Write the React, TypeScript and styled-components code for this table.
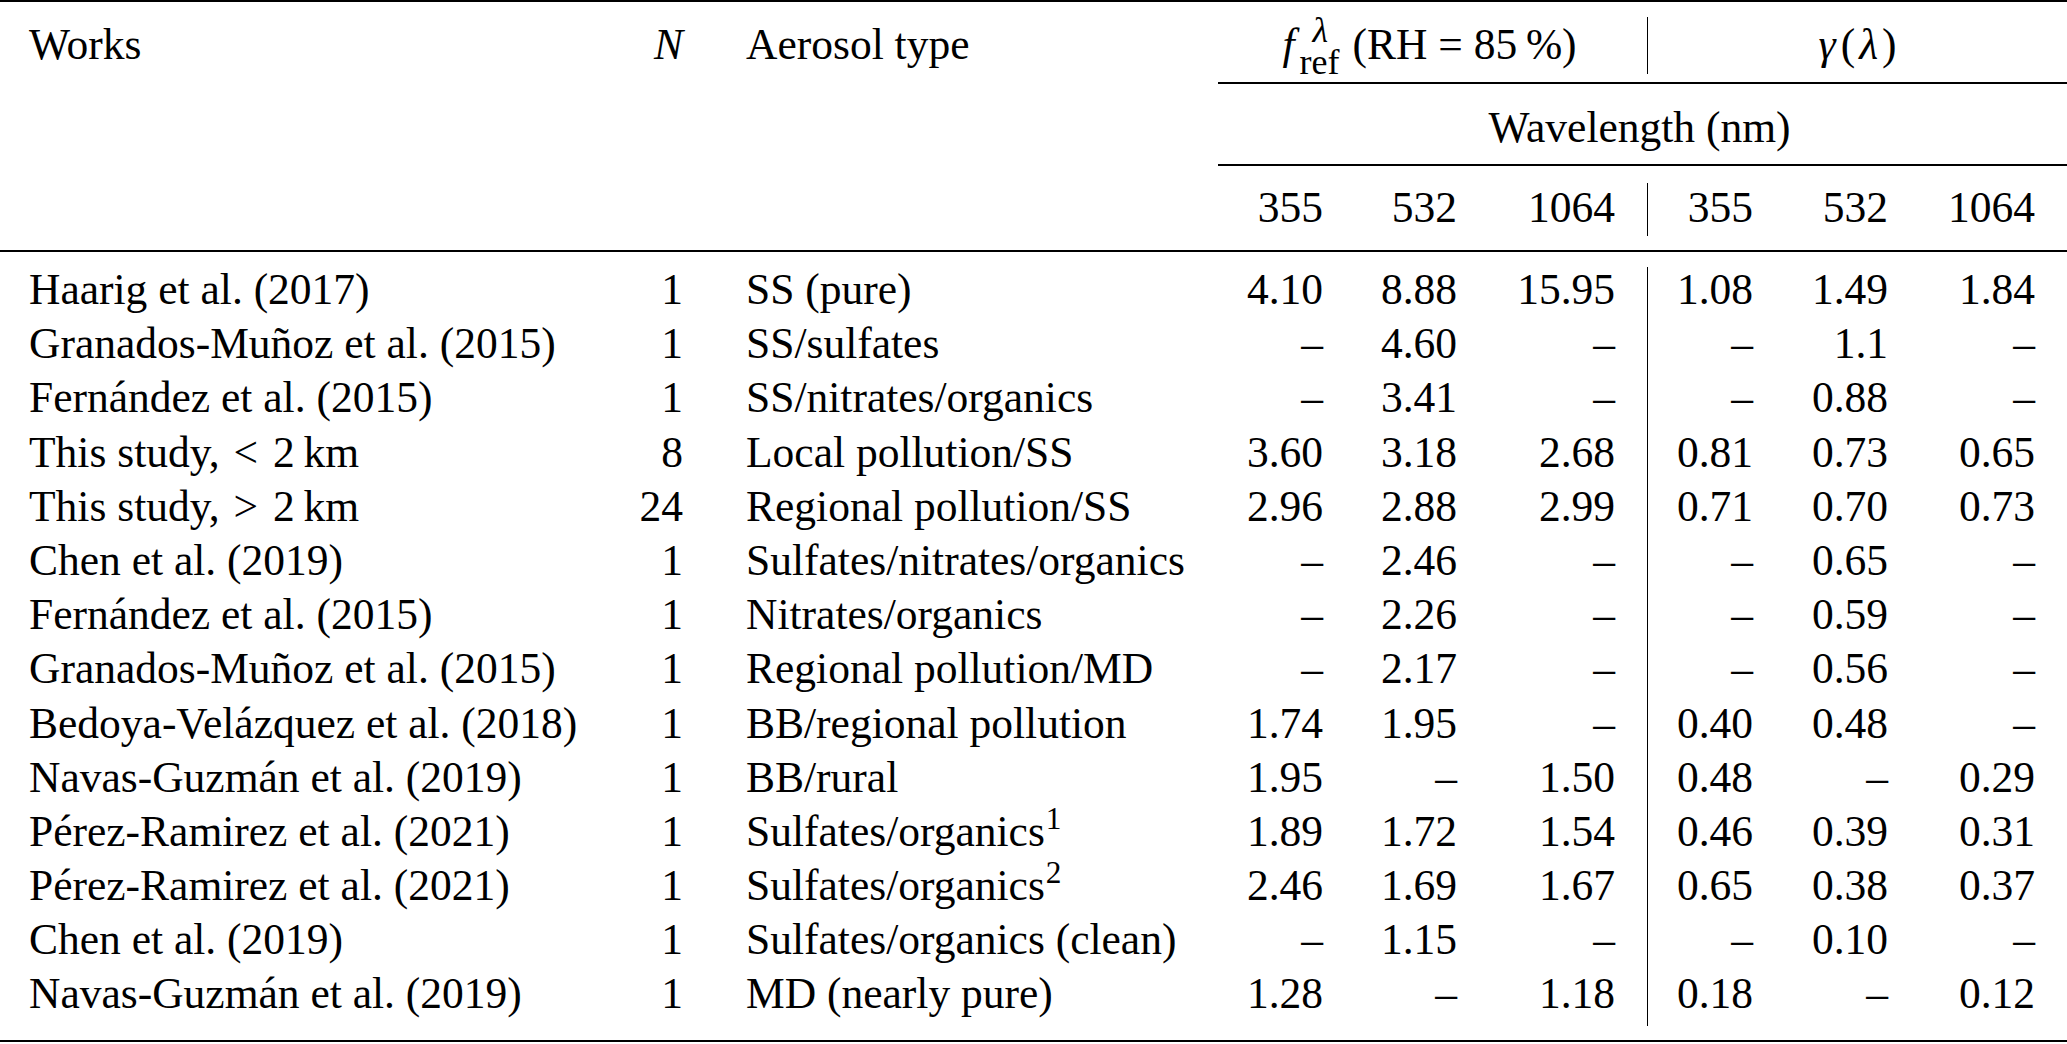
import React from "react";
import styled, { createGlobalStyle } from "styled-components";

const GlobalStyle = createGlobalStyle`
  html, body {
    margin: 0;
    padding: 0;
    background: #ffffff;
  }
  body {
    font-family: "Liberation Serif", "Times New Roman", serif;
    color: #000;
  }
`;

const COLS = "620px 89px 503px 137px 134px 165px 131px 135px 153px";

const Table = styled.div`
  width: 2067px;
  font-family: "Liberation Serif", "Times New Roman", serif;
  font-size: 43.5px;
  color: #000;
`;

const Rule = styled.div<{ $t: number; $gap: number }>`
  height: ${(p) => p.$t}px;
  margin-top: ${(p) => p.$gap}px;
  background: #000;
`;

const CmidRow = styled.div<{ $gap: number }>`
  display: grid;
  grid-template-columns: ${COLS};
  margin-top: ${(p) => p.$gap}px;
  height: 1.5px;
`;

const CmidLine = styled.div`
  grid-column: 4 / -1;
  margin-left: 6px;
  height: 1.5px;
  background: #000;
`;

const Row = styled.div<{ $h: number; $gap?: number }>`
  display: grid;
  grid-template-columns: ${COLS};
  align-items: stretch;
  height: ${(p) => p.$h}px;
  margin-top: ${(p) => p.$gap ?? 0}px;
  box-sizing: border-box;
`;

const Cell = styled.div<{
  $align?: "left" | "right" | "center";
  $pl?: number;
  $pr?: number;
  $pt?: number;
  $span?: string;
  $rule?: boolean;
  $italic?: boolean;
}>`
  box-sizing: border-box;
  line-height: 44.6px;
  white-space: nowrap;
  text-align: ${(p) => p.$align ?? "left"};
  padding-left: ${(p) => p.$pl ?? 0}px;
  padding-right: ${(p) => p.$pr ?? 0}px;
  padding-top: ${(p) => p.$pt ?? 0}px;
  font-style: ${(p) => (p.$italic ? "italic" : "normal")};
  ${(p) => (p.$span ? `grid-column: ${p.$span};` : "")}
  border-right: ${(p) => (p.$rule ? "1px solid #000" : "none")};
`;

const Body = styled.div`
  margin-top: 15px;
`;

const It = styled.span<{ $l?: number; $r?: number }>`
  font-style: italic;
  padding-left: ${(p) => p.$l ?? 0}px;
  padding-right: ${(p) => p.$r ?? 0}px;
`;

const Rel = styled.span`
  padding-left: 14px;
  padding-right: 15px;
`;

const Scripts = styled.span`
  display: inline-flex;
  flex-direction: column;
  align-items: flex-start;
  vertical-align: 17px;
  font-size: 36px;
  line-height: 32px;
  margin: -13px 13px -15px 5px;
`;

const ScriptSup = styled.span`
  font-style: italic;
  margin-left: 13px;
`;

const ScriptSub = styled.span`
  font-style: normal;
`;

const Sup = styled.sup`
  font-size: 0.72em;
  line-height: 0;
  vertical-align: 0.55em;
  margin-left: 1px;
`;

type RowData = {
  work: React.ReactNode;
  n: string;
  type: React.ReactNode;
  v: string[];
};

const D = "–";

const rows: RowData[] = [
  { work: "Haarig et al. (2017)", n: "1", type: "SS (pure)", v: ["4.10", "8.88", "15.95", "1.08", "1.49", "1.84"] },
  { work: "Granados-Muñoz et al. (2015)", n: "1", type: "SS/sulfates", v: [D, "4.60", D, D, "1.1", D] },
  { work: "Fernández et al. (2015)", n: "1", type: "SS/nitrates/organics", v: [D, "3.41", D, D, "0.88", D] },
  {
    work: (
      <>
        This study,<Rel>&lt;</Rel>2{"\u2009"}km
      </>
    ),
    n: "8",
    type: "Local pollution/SS",
    v: ["3.60", "3.18", "2.68", "0.81", "0.73", "0.65"],
  },
  {
    work: (
      <>
        This study,<Rel>&gt;</Rel>2{"\u2009"}km
      </>
    ),
    n: "24",
    type: "Regional pollution/SS",
    v: ["2.96", "2.88", "2.99", "0.71", "0.70", "0.73"],
  },
  { work: "Chen et al. (2019)", n: "1", type: "Sulfates/nitrates/organics", v: [D, "2.46", D, D, "0.65", D] },
  { work: "Fernández et al. (2015)", n: "1", type: "Nitrates/organics", v: [D, "2.26", D, D, "0.59", D] },
  { work: "Granados-Muñoz et al. (2015)", n: "1", type: "Regional pollution/MD", v: [D, "2.17", D, D, "0.56", D] },
  { work: "Bedoya-Velázquez et al. (2018)", n: "1", type: "BB/regional pollution", v: ["1.74", "1.95", D, "0.40", "0.48", D] },
  { work: "Navas-Guzmán et al. (2019)", n: "1", type: "BB/rural", v: ["1.95", D, "1.50", "0.48", D, "0.29"] },
  {
    work: "Pérez-Ramirez et al. (2021)",
    n: "1",
    type: (
      <>
        Sulfates/organics<Sup>1</Sup>
      </>
    ),
    v: ["1.89", "1.72", "1.54", "0.46", "0.39", "0.31"],
  },
  {
    work: "Pérez-Ramirez et al. (2021)",
    n: "1",
    type: (
      <>
        Sulfates/organics<Sup>2</Sup>
      </>
    ),
    v: ["2.46", "1.69", "1.67", "0.65", "0.38", "0.37"],
  },
  { work: "Chen et al. (2019)", n: "1", type: "Sulfates/organics (clean)", v: [D, "1.15", D, D, "0.10", D] },
  { work: "Navas-Guzmán et al. (2019)", n: "1", type: "MD (nearly pure)", v: ["1.28", D, "1.18", "0.18", D, "0.12"] },
];

const numPad = [26, 26, 32, 26, 26, 32];

export default function App() {
  return (
    <>
      <GlobalStyle />
      <Table>
        <Rule $t={2} $gap={0} />
        <Row $h={57} $gap={15}>
          <Cell $pl={29} $pt={5}>Works</Cell>
          <Cell $align="right" $pr={26} $pt={5} $italic>
            N
          </Cell>
          <Cell $pl={37} $pt={5}>Aerosol type</Cell>
          <Cell $span="4 / 7" $align="center" $pt={5} $rule>
            <It>f</It>
            <Scripts>
              <ScriptSup>λ</ScriptSup>
              <ScriptSub>ref</ScriptSub>
            </Scripts>
            (RH = 85{"\u2009"}%)
          </Cell>
          <Cell $span="7 / 10" $align="center" $pt={5}>
            <It $r={5}>γ</It>(<It $l={4} $r={4}>λ</It>)
          </Cell>
        </Row>
        <CmidRow $gap={8}>
          <CmidLine />
        </CmidRow>
        <Row $h={54} $gap={11.5}>
          <Cell $span="4 / 10" $align="center" $pt={10}>
            Wavelength (nm)
          </Cell>
        </Row>
        <CmidRow $gap={15}>
          <CmidLine />
        </CmidRow>
        <Row $h={53} $gap={17.5}>
          <Cell $span="1 / 4" />
          <Cell $align="right" $pr={26} $pt={2}>355</Cell>
          <Cell $align="right" $pr={26} $pt={2}>532</Cell>
          <Cell $align="right" $pr={32} $pt={2} $rule>
            1064
          </Cell>
          <Cell $align="right" $pr={26} $pt={2}>355</Cell>
          <Cell $align="right" $pr={26} $pt={2}>532</Cell>
          <Cell $align="right" $pr={32} $pt={2}>1064</Cell>
        </Row>
        <Rule $t={2} $gap={14} />
        <Body>
          {rows.map((r, i) => (
            <Row key={i} $h={54.2}>
              <Cell $pl={29}>{r.work}</Cell>
              <Cell $align="right" $pr={26}>
                {r.n}
              </Cell>
              <Cell $pl={37}>{r.type}</Cell>
              {r.v.map((val, j) => (
                <Cell key={j} $align="right" $pr={numPad[j]} $rule={j === 2}>
                  {val}
                </Cell>
              ))}
            </Row>
          ))}
        </Body>
        <Rule $t={2} $gap={14} />
      </Table>
    </>
  );
}
